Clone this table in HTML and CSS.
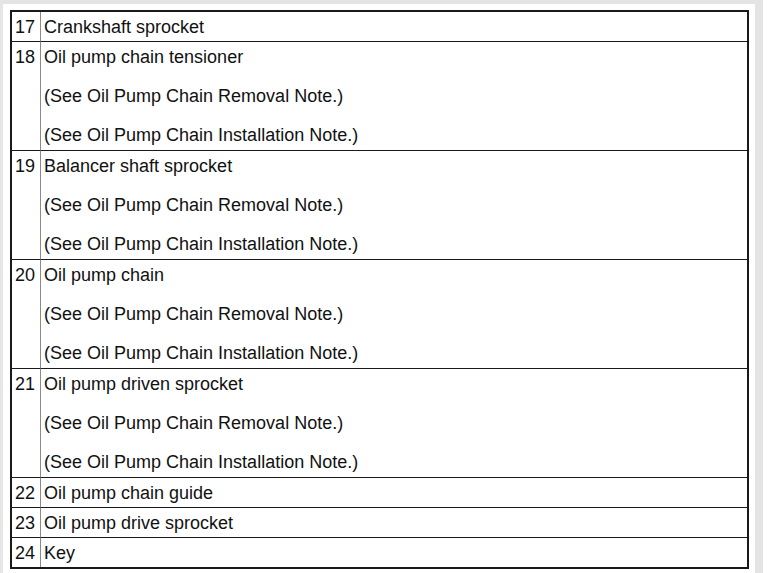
FILE: index.html
```html
<!DOCTYPE html>
<html>
<head>
<meta charset="utf-8">
<link rel="stylesheet" href="styles.css">
</head>
<body>
<div class="frame">
  <table class="parts">
    <tr class="single"><td class="num">17</td><td class="desc">Crankshaft sprocket</td></tr>
    <tr class="group"><td class="num">18</td><td class="desc"><p>Oil pump chain tensioner</p><p>(See Oil Pump Chain Removal Note.)</p><p>(See Oil Pump Chain Installation Note.)</p></td></tr>
    <tr class="group"><td class="num">19</td><td class="desc"><p>Balancer shaft sprocket</p><p>(See Oil Pump Chain Removal Note.)</p><p>(See Oil Pump Chain Installation Note.)</p></td></tr>
    <tr class="group"><td class="num">20</td><td class="desc"><p>Oil pump chain</p><p>(See Oil Pump Chain Removal Note.)</p><p>(See Oil Pump Chain Installation Note.)</p></td></tr>
    <tr class="group"><td class="num">21</td><td class="desc"><p>Oil pump driven sprocket</p><p>(See Oil Pump Chain Removal Note.)</p><p>(See Oil Pump Chain Installation Note.)</p></td></tr>
    <tr class="single"><td class="num">22</td><td class="desc">Oil pump chain guide</td></tr>
    <tr class="single"><td class="num">23</td><td class="desc">Oil pump drive sprocket</td></tr>
    <tr class="single"><td class="num">24</td><td class="desc">Key</td></tr>
  </table>
</div>
</body>
</html>
```
FILE: styles.css
```css
html, body {
  margin: 0;
  padding: 0;
  background: #fff;
}
body {
  font-family: "Liberation Sans", Arial, sans-serif;
  font-size: 18px;
  color: #111;
}
.frame {
  width: 742px;
  height: 580px;
  border-top: 4px solid #e4e4e4;
  border-left: 3px solid #e6e6e6;
  border-right: 8px solid #e4e4e4;
  padding: 6px 3px 0 7px;
}
.parts {
  width: 739px;
  border-collapse: separate;
  border-spacing: 0;
  border: 2px solid #1a1a1a;
}
.parts td {
  border-top: 1px solid #1a1a1a;
  padding: 5px 4px 4px 4px;
  line-height: 20px;
  vertical-align: top;
}
.parts tr:first-child td {
  border-top: none;
}
.parts .num {
  width: 20px;
  padding-left: 3px;
  padding-right: 5px;
  border-right: 1px solid #8a8a8a;
}
.parts .desc {
  padding-left: 3px;
}
.desc p {
  margin: 0;
}
.desc p + p {
  margin-top: 19px;
}
.parts .group td {
  padding-bottom: 5px;
}
```
